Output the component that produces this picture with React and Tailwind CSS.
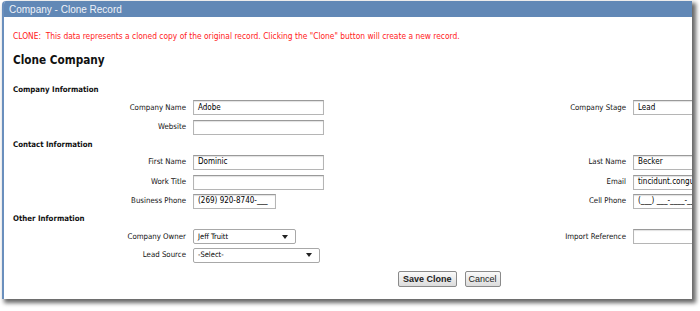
import React from 'react';

const LABEL_FONT = { fontFamily: '"DejaVu Sans Condensed", "DejaVu Sans", Tahoma, sans-serif' };

const TextBox = ({ value = '', width = 'w-[131px]' }) => (
  <div
    className={`${width} h-[15px] shrink-0 border border-[#b5b5b5] border-t-[#9a9a9a] bg-white shadow-[inset_0_1px_1px_rgba(0,0,0,0.12)] px-[4px] flex items-center text-[8px] text-black overflow-hidden whitespace-nowrap`}
  >
    {value}
  </div>
);

const SelectBox = ({ value, width }) => (
  <div
    className={`${width} h-[15px] shrink-0 border border-[#a8a8a8] rounded-[2px] bg-white px-[4px] flex items-center justify-between text-[7.5px] text-black`}
  >
    <span>{value}</span>
    <svg width="6" height="4" viewBox="0 0 6 4" className="mr-[3px]">
      <path d="M0 0h6L3 4z" fill="#222" />
    </svg>
  </div>
);

const SectionHeading = ({ children, h }) => (
  <div className={`${h} flex items-center pl-[9px] text-[7.8px] font-bold text-[#111]`}>{children}</div>
);

// one table row: left label + field, optional right label + field
const FieldRow = ({ h, label, field, rightLabel, rightField }) => (
  <div className={`${h} flex items-center`}>
    <div className="w-[182px] shrink-0 text-right text-[7.8px] text-[#111]">{label}</div>
    <div className="w-[260px] shrink-0 pl-[7px] flex items-center">{field}</div>
    <div className="w-[180px] shrink-0 text-right text-[7.8px] text-[#111]">{rightLabel}</div>
    <div className="pl-[7px] flex items-center">{rightField}</div>
  </div>
);

export default function App() {
  return (
    <div className="w-[700px] h-[311px] bg-white overflow-hidden" style={LABEL_FONT}>
      <div className="ml-[2px] mt-[1px] w-[690px] h-[298px] flex flex-col border-l-2 border-[#6a8fbd] rounded-tl-[4px] bg-white shadow-[3px_3px_4px_1px_rgba(0,0,0,0.6)] overflow-hidden">
        {/* title bar */}
        <div
          className="h-[16px] shrink-0 bg-[#6188b6] flex items-center pl-[5px] text-[10px] text-[#eef2f8]"
          style={{ fontFamily: '"Liberation Sans", Arial, sans-serif' }}
        >
          Company - Clone Record
        </div>

        {/* body */}
        <div className="flex flex-col">
          <div className="h-[14px] mt-[12px] flex items-center pl-[9px] text-[8.35px] text-[#ff2020] whitespace-nowrap">
            CLONE:&nbsp; This data represents a cloned copy of the original record. Clicking the "Clone" button will create a new record.
          </div>
          <div className="h-[18px] mt-[9px] flex items-center pl-[9px] text-[11.7px] font-bold text-[#111]">
            Clone Company
          </div>

          <div className="mt-[12px]">
            <SectionHeading h="h-[16px]">Company Information</SectionHeading>
          </div>
          <FieldRow
            h="h-[19px]"
            label="Company Name"
            field={<TextBox value="Adobe" />}
            rightLabel="Company Stage"
            rightField={<TextBox value="Lead" width="w-[120px]" />}
          />
          <FieldRow h="h-[20px]" label="Website" field={<TextBox />} />

          <SectionHeading h="h-[15px]">Contact Information</SectionHeading>
          <FieldRow
            h="h-[20px]"
            label="First Name"
            field={<TextBox value="Dominic" />}
            rightLabel="Last Name"
            rightField={<TextBox value="Becker" width="w-[120px]" />}
          />
          <FieldRow
            h="h-[20px]"
            label="Work Title"
            field={<TextBox />}
            rightLabel="Email"
            rightField={<TextBox value="tincidunt.congue@" width="w-[120px]" />}
          />
          <FieldRow
            h="h-[18px]"
            label="Business Phone"
            field={<TextBox value="(269) 920-8740-___" width="w-[83px]" />}
            rightLabel="Cell Phone"
            rightField={<TextBox value="(___) ___-____-____" width="w-[120px]" />}
          />

          <SectionHeading h="h-[18px]">Other Information</SectionHeading>
          <FieldRow
            h="h-[17px]"
            label="Company Owner"
            field={<SelectBox value="Jeff Truitt" width="w-[103px]" />}
            rightLabel="Import Reference"
            rightField={<TextBox width="w-[120px]" />}
          />
          <FieldRow
            h="h-[20px]"
            label="Lead Source"
            field={<SelectBox value="-Select-" width="w-[127px]" />}
          />

          {/* buttons */}
          <div
            className="h-[28px] flex items-center pl-[394px] gap-[8px]"
            style={{ fontFamily: '"Liberation Sans", Arial, sans-serif' }}
          >
            <button className="h-[16px] px-[4px] border border-[#8a8a8a] rounded-[2px] bg-gradient-to-b from-[#fafafa] to-[#dcdcdc] text-[9px] font-bold text-[#222] leading-none">
              Save Clone
            </button>
            <button className="h-[16px] px-[3px] border border-[#8a8a8a] rounded-[2px] bg-gradient-to-b from-[#fafafa] to-[#dcdcdc] text-[9px] text-[#222] leading-none">
              Cancel
            </button>
          </div>
        </div>
      </div>
    </div>
  );
}
